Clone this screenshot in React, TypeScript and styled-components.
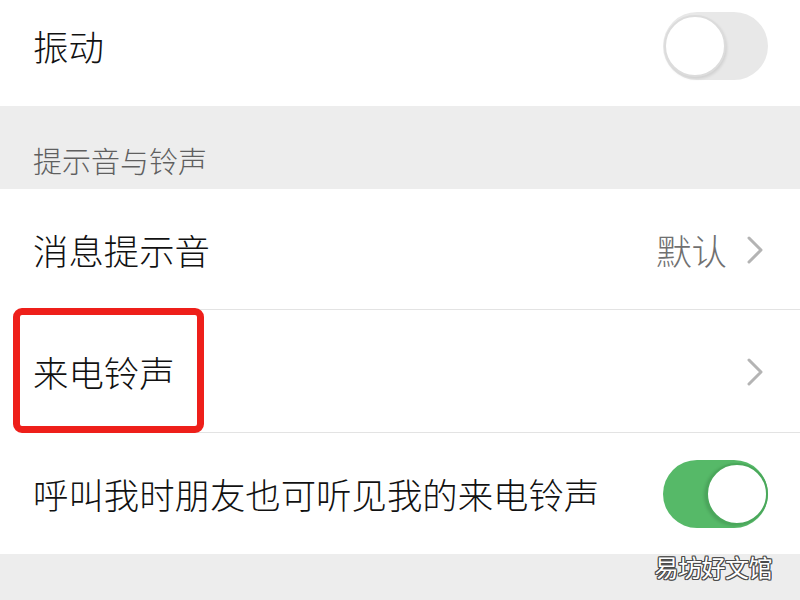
import * as React from "react";
import styled, { createGlobalStyle } from "styled-components";

const GlobalStyle = createGlobalStyle`
  html, body {
    margin: 0;
    padding: 0;
    background: #ededed;
  }
  body {
    font-family: "Noto Sans CJK SC", "Noto Sans", sans-serif;
  }
`;

const Page = styled.div`
  width: 800px;
  height: 600px;
  overflow: hidden;
  background: #ededed;
  display: flex;
  flex-direction: column;
`;

interface CellProps {
  readonly $height: number;
  readonly $padBottom?: number;
  readonly $divided?: boolean;
}

const Cell = styled.div<CellProps>`
  position: relative;
  box-sizing: border-box;
  height: ${(p) => p.$height}px;
  padding: 0 32px ${(p) => p.$padBottom || 0}px 33px;
  background: #fff;
  display: flex;
  align-items: center;
  justify-content: space-between;
  flex: none;
  &::after {
    content: "";
    display: ${(p) => (p.$divided ? "block" : "none")};
    position: absolute;
    left: 33px;
    right: 0;
    bottom: 0;
    height: 1px;
    background: #e3e3e3;
  }
`;

const Title = styled.span`
  font-size: 35.4px;
  font-weight: 300;
  line-height: 40px;
  color: #111;
  white-space: nowrap;
`;

const SectionHeader = styled.div`
  box-sizing: border-box;
  height: 83px;
  padding: 40px 0 0 33px;
  font-size: 29px;
  font-weight: 300;
  line-height: 29px;
  color: #5f5f5f;
  flex: none;
`;

const Trailing = styled.div`
  display: flex;
  align-items: center;
  gap: 20px;
`;

const Value = styled.span`
  font-size: 35.4px;
  font-weight: 300;
  line-height: 40px;
  color: #707070;
`;

const Chevron = styled.svg`
  width: 16px;
  height: 28px;
  margin-right: 5px;
  display: block;
`;

interface SwitchProps {
  readonly $on?: boolean;
}

const Track = styled.div<SwitchProps>`
  position: relative;
  width: 105px;
  height: 68px;
  border-radius: 34px;
  background: ${(p) => (p.$on ? "#56b968" : "#e8e8e8")};
  flex: none;
`;

const Knob = styled.div<SwitchProps>`
  position: absolute;
  top: 3px;
  left: ${(p) => (p.$on ? "43px" : "1px")};
  width: 62px;
  height: 62px;
  box-sizing: border-box;
  border-radius: 50%;
  background: #fff;
  border: 2px solid ${(p) => (p.$on ? "#4aa85b" : "#dcdcdc")};
  box-shadow: ${(p) => (p.$on ? "-2px 1px 3px rgba(0,0,0,0.12)" : "1px 2px 3px rgba(0,0,0,0.10)")};
`;

const Highlight = styled.div`
  position: absolute;
  left: 13px;
  top: -2px;
  width: 191px;
  height: 125px;
  box-sizing: border-box;
  border: 7px solid #ee1f1a;
  border-radius: 9px;
  z-index: 2;
  pointer-events: none;
`;

const Footer = styled.div`
  flex: 1;
  display: flex;
  justify-content: flex-end;
  align-items: flex-start;
  padding: 1px 28px 0 0;
`;

const Watermark = styled.span`
  font-size: 24px;
  line-height: 24px;
  letter-spacing: -0.5px;
  color: #fff;
  text-shadow: -1px 0 #4a4a4a, 1px 0 #4a4a4a, 0 -1px #4a4a4a, 0 1px #4a4a4a,
    -1px -1px #4a4a4a, 1px 1px #4a4a4a, -1px 1px #4a4a4a, 1px -1px #4a4a4a;
`;

const Switch = ({ on }: { on?: boolean }) => (
  <Track $on={on}>
    <Knob $on={on} />
  </Track>
);

const Arrow = () => (
  <Chevron viewBox="0 0 16 28">
    <path d="M2 2 L14 14 L2 26" fill="none" stroke="#b4b4b4" strokeWidth="3" strokeLinecap="round" strokeLinejoin="round" />
  </Chevron>
);

export default function App() {
  return (
    <Page>
      <GlobalStyle />
      <Cell $height={106} $padBottom={14}>
        <Title>振动</Title>
        <Switch />
      </Cell>
      <SectionHeader>提示音与铃声</SectionHeader>
      <Cell $height={121} $divided>
        <Title>消息提示音</Title>
        <Trailing>
          <Value>默认</Value>
          <Arrow />
        </Trailing>
      </Cell>
      <Cell $height={123} $divided>
        <Highlight />
        <Title>来电铃声</Title>
        <Trailing>
          <Arrow />
        </Trailing>
      </Cell>
      <Cell $height={121}>
        <Title>呼叫我时朋友也可听见我的来电铃声</Title>
        <Switch on />
      </Cell>
      <Footer>
        <Watermark>易坊好文馆</Watermark>
      </Footer>
    </Page>
  );
}
